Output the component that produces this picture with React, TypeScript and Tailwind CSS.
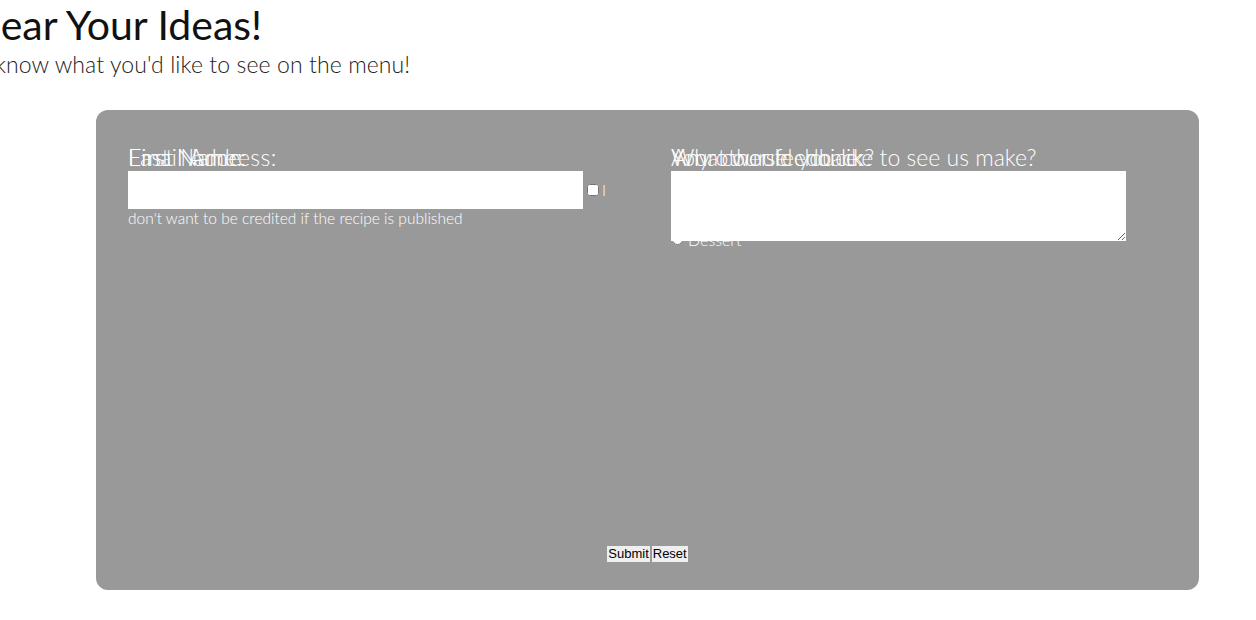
import { useState } from 'react';

const lato = "font-['Lato','Noto_Sans',sans-serif]";

export default function App() {
  const [course, setCourse] = useState('');
  const courses = ['Appetizer', 'Main Course', 'Dessert'];

  return (
    <div className={`min-h-screen bg-white ${lato} overflow-hidden`}>
      {/* heading, pushed past the left edge */}
      <header className="whitespace-nowrap">
        <h1 className="text-[41px] leading-[49px] font-normal text-[#111] -ml-[30px]">Hear Your Ideas!</h1>
        <p className="text-[23px] leading-[28px] font-light tracking-[0.1px] text-[#222] -ml-[5px] mt-[1px]">know what you'd like to see on the menu!</p>
      </header>

      <form
        className="mt-[32px] ml-[96px] w-[1103px] h-[480px] rounded-[12px] bg-[#999999] px-[32px] pt-[33px] pb-[28px] flex flex-col text-white"
        onSubmit={e => e.preventDefault()}
      >
        <div className="flex">
          {/* left column: all fields share one cell */}
          <div className="w-[543px] grid">
            <div className="col-start-1 row-start-1">
              <label className="block text-[23px] leading-[28px] font-light tracking-[0.4px]">First Name:</label>
              <input className="w-[455px] h-[38px] bg-white text-black outline-none" />
            </div>
            <div className="col-start-1 row-start-1">
              <label className="block text-[23px] leading-[28px] font-light tracking-[0.4px]">Last Name:</label>
              <input className="w-[455px] h-[38px] bg-white text-black outline-none" />
            </div>
            <div className="col-start-1 row-start-1 w-[490px] text-[15.5px] leading-[18px]">
              <label className="block text-[23px] leading-[28px] font-light tracking-[0.4px]">Email Address:</label>
              <input type="email" className="w-[455px] h-[38px] bg-white text-black outline-none" />
              <input type="checkbox" className="ml-[4px] mr-[3px] w-[12px] h-[12px]" />
              <span className="font-light text-white">I don't want to be credited if the recipe is published</span>
            </div>
          </div>

          {/* right column */}
          <div className="grid">
            <div className="col-start-1 row-start-1">
              <label className="block text-[23px] leading-[28px] font-light">Your course choice:</label>
              <div className="pt-[6px] text-[16px] leading-[25px] font-light">
                {courses.map(c => (
                  <label key={c} className="flex items-center gap-[5px] pl-[1px]">
                    <input
                      type="radio"
                      name="course"
                      checked={course === c}
                      onChange={() => setCourse(c)}
                      className="w-[11px] h-[11px] accent-white"
                    />
                    {c}
                  </label>
                ))}
              </div>
            </div>
            <div className="col-start-1 row-start-1">
              <label className="block text-[23px] leading-[28px] font-light">What would you like to see us make?</label>
              <textarea className="block w-[455px] h-[70px] bg-white text-black outline-none" />
            </div>
            <div className="col-start-1 row-start-1">
              <label className="block text-[23px] leading-[28px] font-light">Any other feedback?</label>
              <textarea className="block w-[455px] h-[70px] bg-white text-black outline-none" />
            </div>
          </div>
        </div>

        <div className="mt-auto flex justify-center gap-[2px] font-['Arial','Liberation_Sans',sans-serif] text-[13px] text-black">
          <button type="submit" className="bg-[#efefef] px-[1px] leading-[16px]">Submit</button>
          <button type="reset" className="bg-[#efefef] px-[1px] leading-[16px]">Reset</button>
        </div>
      </form>
    </div>
  );
}
